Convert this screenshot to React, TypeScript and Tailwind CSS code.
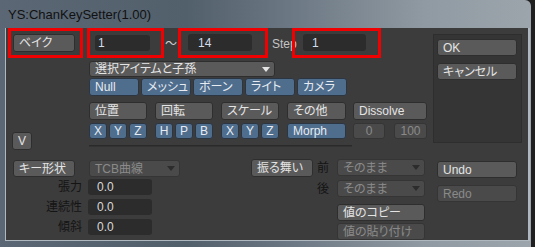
import { ReactNode } from 'react';

type Tone = 'gray' | 'blue' | 'off';

const tones: Record<Tone, string> = {
    gray: 'bg-[#5a5a5a] text-[#e4e4e4] border-[#2e2e2e]',
    blue: 'bg-[#4f6d8d] text-[#e6ecf2] border-[#2c3642]',
    off: 'bg-[#4a4a4a] text-[#8a8a8a] border-[#353535]',
};

const Btn = ({
    label,
    className = '',
    tone = 'gray',
    center = false,
}: {
    label: ReactNode;
    className?: string;
    tone?: Tone;
    center?: boolean;
}) => (
    <div
        className={`flex shrink-0 items-center overflow-hidden rounded-[3px] border text-[12px] leading-none whitespace-nowrap ${
            center ? 'justify-center' : 'pl-[5px]'
        } ${tones[tone]} ${className}`}
    >
        {label}
    </div>
);

const Arrow = ({ color }: { color: string }) => (
    <svg width="8" height="5" viewBox="0 0 8 5" className="shrink-0">
        <polygon points="0,0 8,0 4,5" fill={color} />
    </svg>
);

const Select = ({
    label,
    className = '',
    off = false,
}: {
    label: string;
    className?: string;
    off?: boolean;
}) => (
    <div
        className={`flex shrink-0 items-center justify-between rounded-[3px] border pl-[5px] pr-[4px] text-[12px] leading-none whitespace-nowrap ${
            off ? tones.off : tones.gray
        } ${className}`}
    >
        <span>{label}</span>
        <Arrow color={off ? '#2c2c2c' : '#e4e4e4'} />
    </div>
);

const Field = ({ value, className = '' }: { value: string; className?: string }) => (
    <div
        className={`flex shrink-0 items-center rounded-[3px] bg-[#2c2c2c] text-[12px] leading-none text-[#d4dcea] ${className}`}
    >
        {value}
    </div>
);

const RedBox = ({ children, className = '' }: { children: ReactNode; className?: string }) => (
    <div className={`flex shrink-0 border-[3px] border-[#f00000] ${className}`}>{children}</div>
);

const LabelRow = ({ label, className = '' }: { label: string; className?: string }) => (
    <div className={`flex h-[16px] items-center ${className}`}>
        <div className="w-[76px] text-right text-[12px] leading-none text-[#141414]">{label}</div>
        <Field value="0.0" className="ml-[6px] h-[16px] w-[64px] pl-[9px] text-[#d8d8d8]" />
    </div>
);

const App = () => {
    return (
        <div className="flex h-[247px] w-[535px] overflow-hidden bg-[#1f1f1f] font-['Liberation_Sans','Noto_Sans_CJK_JP',sans-serif] [font-feature-settings:'palt']">
            {/* window */}
            <div className="flex h-[247px] w-[531px] flex-col rounded-tr-[6px] bg-[linear-gradient(90deg,#5b6774_0%,#52606c_35%,#6c7884_55%,#909aa2_80%,#9ca5ac_100%)]">
                <div className="flex h-[29px] items-center pl-[8px] pt-[2px] text-[13px] text-[#111]">
                    YS:ChanKeySetter(1.00)
                </div>

                <div className="flex flex-1 pb-[6px] pl-[5px] pr-[1px]">
                    <div className="flex flex-1 border-b border-l border-r-2 border-[#b0b8bf] bg-[#3c3c3c]">
                        {/* main column */}
                        <div className="flex w-[427px] flex-col">
                            {/* red boxed row */}
                            <div className="flex h-[30px]">
                                <RedBox className="ml-[2px] w-[75px] pl-[2px] pt-[3px]">
                                    <Btn label="ベイク" className="h-[18px] w-[62px]" />
                                </RedBox>
                                <RedBox className="ml-[4px] w-[77px] pl-[5px] pt-[4px]">
                                    <Field value="1" className="h-[16px] w-[55px] pl-[3px]" />
                                </RedBox>
                                <div className="flex w-[14px] items-center justify-center pt-[2px] text-[12px] text-[#cfcfcf]">
                                    〜
                                </div>
                                <RedBox className="w-[90px] pl-[7px] pt-[3px]">
                                    <Field value="14" className="h-[17px] w-[64px] pl-[10px]" />
                                </RedBox>
                                <div className="flex w-[24px] items-center pl-[4px] pt-[2px] text-[12px] text-[#c4c4c4]">
                                    Step
                                </div>
                                <RedBox className="w-[89px] pl-[8px] pt-[3px]">
                                    <Field value="1" className="h-[17px] w-[63px] pl-[9px]" />
                                </RedBox>
                            </div>

                            {/* item filter section */}
                            <div className="mt-[3px] flex">
                                <div className="w-[83px]">
                                    <Btn label="V" center className="ml-[6px] mt-[71px] h-[18px] w-[20px]" />
                                </div>
                                <div className="flex flex-col">
                                    <Select label="選択アイテムと子孫" className="h-[16px] w-[186px]" />
                                    <div className="mt-[1px] flex h-[18px] gap-[2px]">
                                        <Btn label="Null" tone="blue" className="w-[50px]" />
                                        <Btn label="メッシュ" tone="blue" className="w-[50px]" />
                                        <Btn label="ボーン" tone="blue" className="w-[50px]" />
                                        <Btn label="ライト" tone="blue" className="w-[50px]" />
                                        <Btn label="カメラ" tone="blue" className="w-[50px]" />
                                    </div>
                                    <div className="mt-[6px] flex h-[18px]">
                                        <Btn label="位置" className="w-[58px]" />
                                        <Btn label="回転" className="ml-[8px] w-[58px]" />
                                        <Btn label="スケール" className="ml-[8px] w-[58px]" />
                                        <Btn label="その他" className="ml-[8px] w-[59px]" />
                                        <Btn label="Dissolve" className="ml-[7px] w-[74px]" />
                                    </div>
                                    <div className="mt-[3px] flex h-[16px]">
                                        <div className="flex w-[58px] gap-[2px]">
                                            <Btn label="X" tone="blue" center className="w-[18px]" />
                                            <Btn label="Y" tone="blue" center className="w-[18px]" />
                                            <Btn label="Z" tone="blue" center className="w-[18px]" />
                                        </div>
                                        <div className="ml-[8px] flex w-[58px] gap-[2px]">
                                            <Btn label="H" tone="blue" center className="w-[18px]" />
                                            <Btn label="P" tone="blue" center className="w-[18px]" />
                                            <Btn label="B" tone="blue" center className="w-[18px]" />
                                        </div>
                                        <div className="ml-[8px] flex w-[58px] gap-[2px]">
                                            <Btn label="X" tone="blue" center className="w-[18px]" />
                                            <Btn label="Y" tone="blue" center className="w-[18px]" />
                                            <Btn label="Z" tone="blue" center className="w-[18px]" />
                                        </div>
                                        <Btn label="Morph" tone="blue" className="ml-[8px] w-[59px]" />
                                        <Btn label="0" tone="off" center className="ml-[7px] w-[32px]" />
                                        <Btn label="100" tone="off" center className="ml-[9px] w-[33px]" />
                                    </div>
                                    <div className="mt-[6px] h-[2px] w-[263px] border-t border-b border-t-[#2a2a2a] border-b-[#333]" />
                                </div>
                            </div>

                            {/* key shape / behaviour section */}
                            <div className="mt-[9px] flex">
                                <div className="flex w-[174px] flex-col">
                                    <div className="mt-[1px] flex h-[17px]">
                                        <Btn label="キー形状" className="ml-[7px] w-[62px]" />
                                        <Select label="TCB曲線" off className="ml-[14px] w-[91px]" />
                                    </div>
                                    <LabelRow label="張力" className="mt-[2px]" />
                                    <LabelRow label="連続性" className="mt-[4px]" />
                                    <LabelRow label="傾斜" className="mt-[4px]" />
                                </div>
                                <Btn label="振る舞い" className="ml-[71px] h-[18px] w-[62px]" />
                                <div className="ml-[4px] flex flex-col">
                                    <div className="flex h-[17px] items-center">
                                        <div className="w-[20px] text-[12px] leading-none text-[#141414]">前</div>
                                        <Select label="そのまま" off className="h-[17px] w-[88px]" />
                                    </div>
                                    <div className="mt-[4px] flex h-[17px] items-center">
                                        <div className="w-[20px] text-[12px] leading-none text-[#141414]">後</div>
                                        <Select label="そのまま" off className="h-[17px] w-[88px]" />
                                    </div>
                                    <Btn label="値のコピー" className="ml-[20px] mt-[7px] h-[17px] w-[88px]" />
                                    <Btn label="値の貼り付け" tone="off" className="ml-[20px] mt-[2px] h-[17px] w-[88px]" />
                                </div>
                            </div>
                        </div>

                        {/* right column */}
                        <div className="flex w-[89px] flex-col">
                            <div className="mt-[6px] flex h-[109px] flex-col border border-[#2e2e2e] bg-[#353535] px-[3px] pt-[4px]">
                                <Btn label="OK" className="h-[17px] w-[80px]" />
                                <Btn label="キャンセル" className="mt-[7px] h-[17px] w-[80px]" />
                            </div>
                            <Btn label="Undo" className="ml-[4px] mt-[18px] h-[17px] w-[80px]" />
                            <Btn label="Redo" tone="off" className="ml-[4px] mt-[7px] h-[17px] w-[80px]" />
                        </div>
                    </div>
                </div>
            </div>
        </div>
    );
};

export default App;
